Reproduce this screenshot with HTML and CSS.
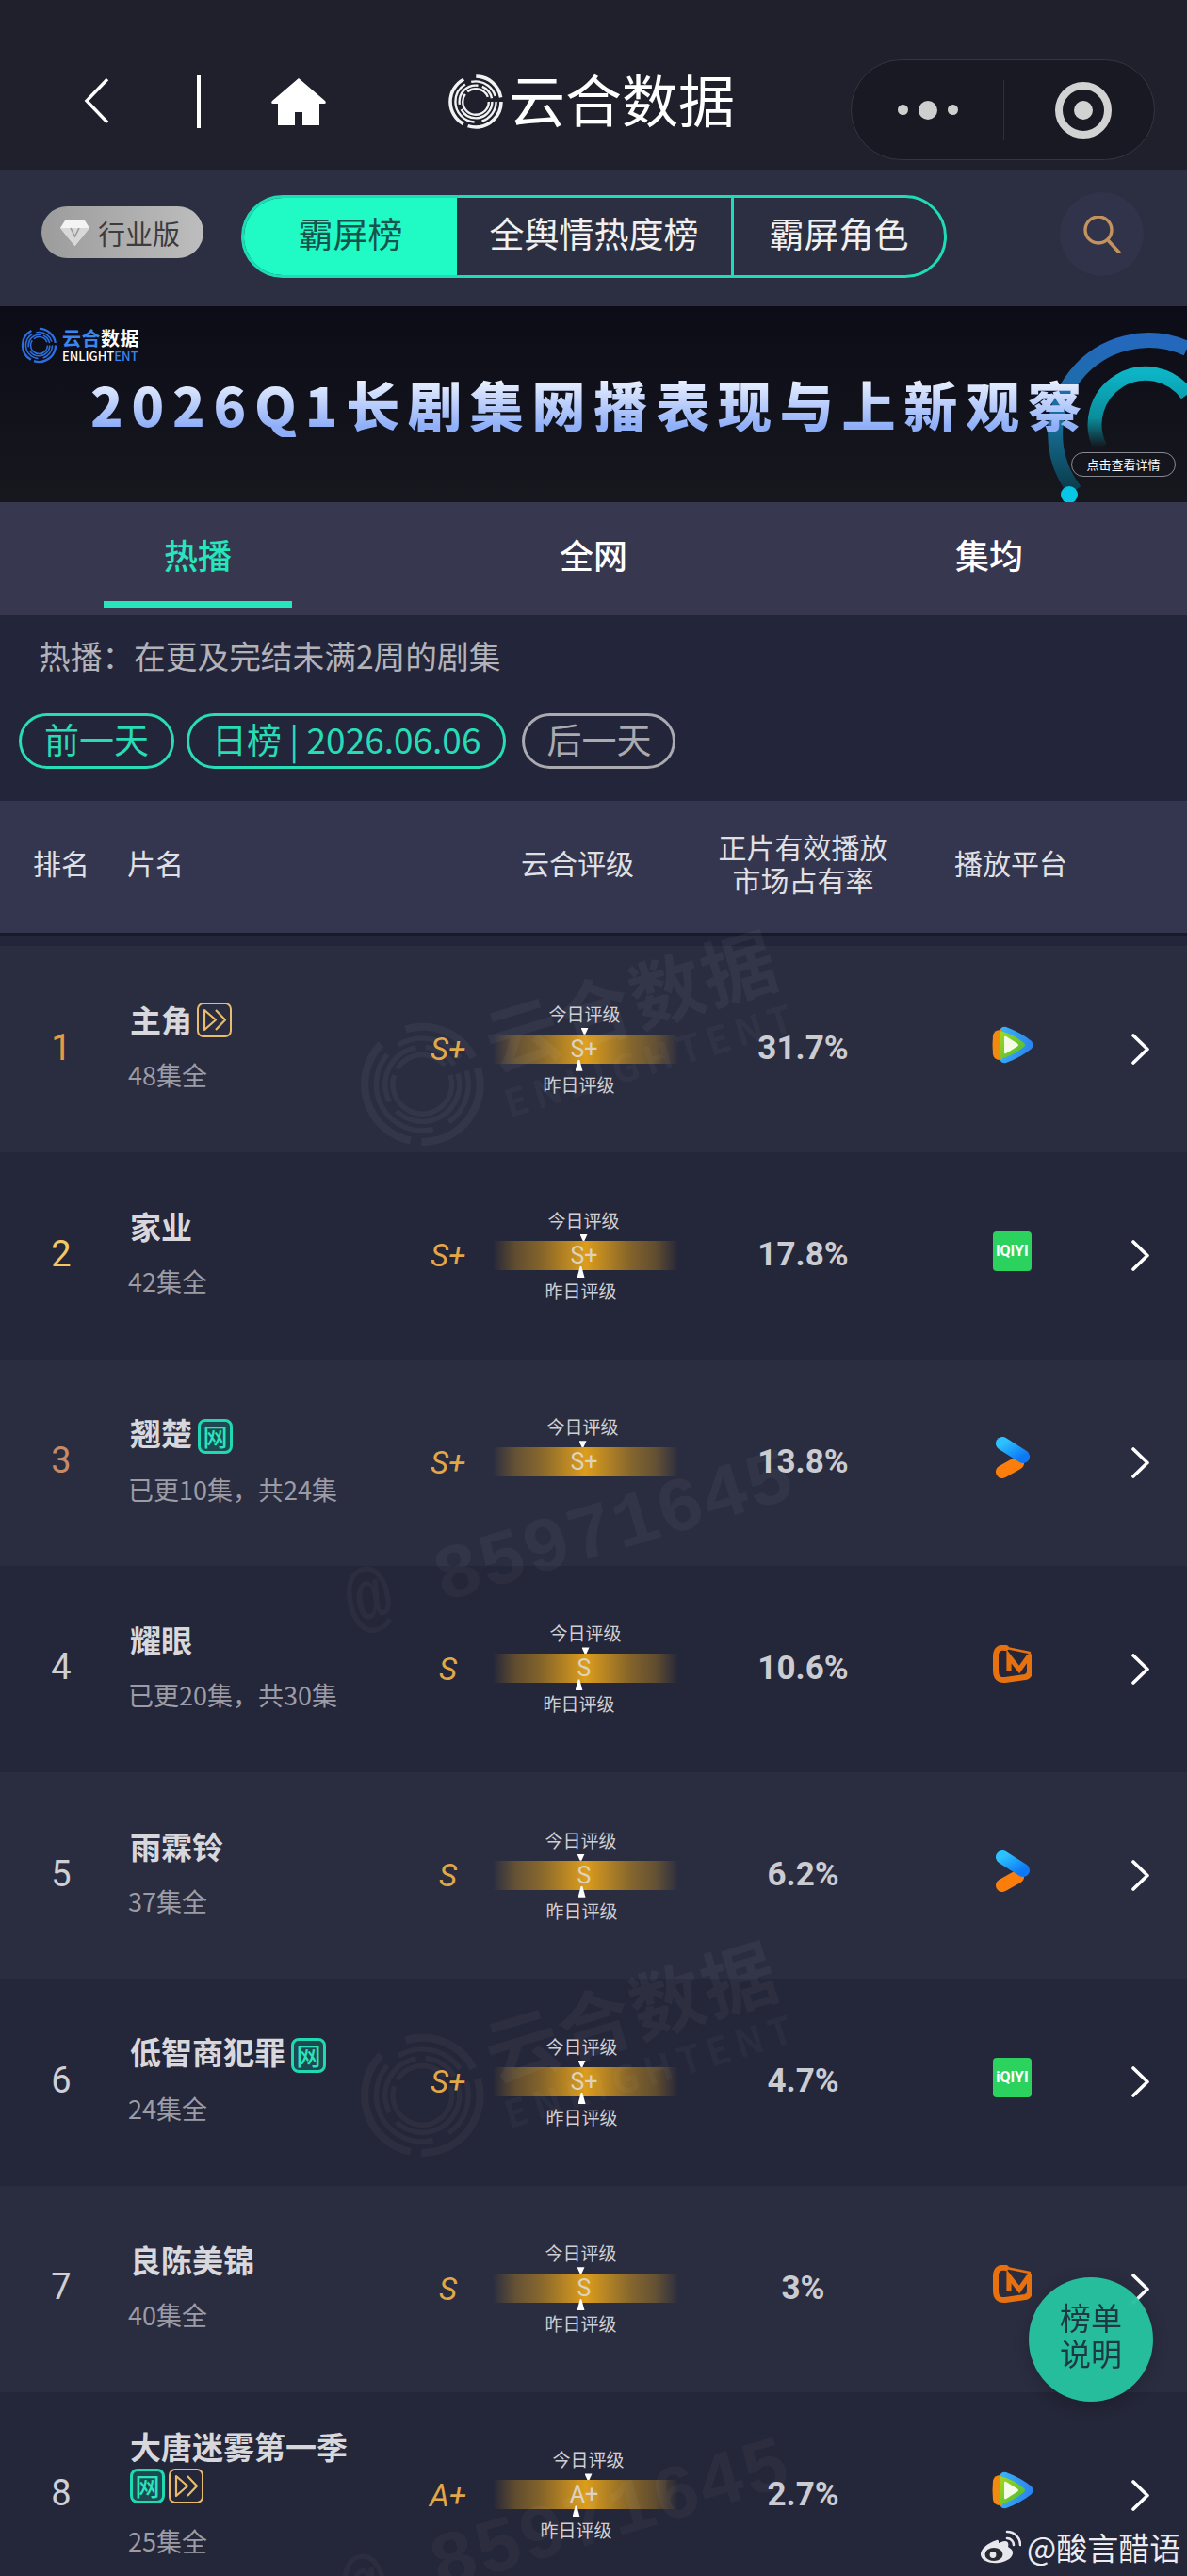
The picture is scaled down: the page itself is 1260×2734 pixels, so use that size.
FILE: index.html
```html
<!DOCTYPE html>
<html lang="zh-CN">
<head>
  <meta charset="UTF-8" />
  <title>云合数据</title>
  <link rel="stylesheet" href="styles.css">
</head>
<body>
  <svg class="defs" width="0" height="0">
    <defs>
      <symbol id="rings" viewBox="0 0 100 100">
        <g fill="none" stroke="currentColor">
          <circle cx="50" cy="50" r="45" stroke-width="6" pathLength="100" stroke-dasharray="30 3 34 8 22 3" />
          <circle cx="50" cy="50" r="36" stroke-width="4" pathLength="100" stroke-dasharray="20 6 40 5 24 5" />
          <circle cx="50" cy="50" r="29" stroke-width="4" pathLength="100" stroke-dasharray="42 5 30 4 15 4" />
          <circle cx="50" cy="50" r="23" stroke-width="4" pathLength="100" stroke-dasharray="60 4 30 6" />
        </g>
      </symbol>
      <symbol id="chevron" viewBox="0 0 19 33">
        <path d="M2 2 L17 16.5 L2 31" fill="none" stroke="#fff" stroke-width="3.6" stroke-linecap="round" stroke-linejoin="round" />
      </symbol>
      <symbol id="play-badge" viewBox="0 0 37 37">
        <rect x="1" y="1" width="35" height="35" rx="6" fill="none" stroke="#e9bb6c" stroke-width="2" />
        <path d="M8 8 L20 18.5 L8 29 Z M20 8 L30 18.5 L20 29" fill="none" stroke="#e9bb6c" stroke-width="2.2" stroke-linejoin="round" />
      </symbol>
      <linearGradient id="tx-blue" x1="0" y1="0" x2="1" y2="0.3">
        <stop offset="0" stop-color="#3db4f5" />
        <stop offset="1" stop-color="#2a86ee" />
      </linearGradient>
      <linearGradient id="tx-green" x1="0" y1="0" x2="1" y2="1">
        <stop offset="0" stop-color="#a6d81f" />
        <stop offset="1" stop-color="#45b83a" />
      </linearGradient>
      <linearGradient id="yk-blue" x1="0" y1="0" x2="1" y2="1">
        <stop offset="0" stop-color="#2cc1ff" />
        <stop offset="1" stop-color="#0c78f5" />
      </linearGradient>
      <symbol id="tencent" viewBox="0 0 44 40">
        <path d="M9 3 Q11 0 15 1 Q31 7 42 16 Q45 20 42 24 Q31 33 15 39 Q11 40 9 37 Z" fill="url(#tx-blue)" />
        <path d="M9 4 Q2 4 1 10 Q0 20 1 30 Q2 36 9 36 L11 36 L11 4 Z" fill="#f28a0f" />
        <path d="M8 5 Q22 8 34 18 Q36 20 34 22 Q22 32 8 35 Z" fill="url(#tx-green)" />
        <path d="M13 12 Q13 10 15 11 L27 18.5 Q29 20 27 21.5 L15 29 Q13 30 13 28 Z" fill="#f4fbe6" />
      </symbol>
      <symbol id="youku" viewBox="0 0 36 44">
        <path d="M7 37 L23 28" fill="none" stroke="#fb7d0c" stroke-width="14" stroke-linecap="round" />
        <path d="M7 7 L29 21" fill="none" stroke="url(#yk-blue)" stroke-width="14" stroke-linecap="round" />
      </symbol>
      <symbol id="mango" viewBox="0 0 41 41">
        <path d="M12 2.5 L39 8" fill="none" stroke="#e8710f" stroke-width="2.5" stroke-linecap="round" />
        <path d="M14 3 Q3 1 3 12 V27 Q3 38 13 37 L34 34 Q39 33 39 28 V12" fill="none" stroke="#e8710f" stroke-width="6" stroke-linecap="round" />
        <path d="M17 28 L17 12 L28 26 L38 12" fill="none" stroke="#e8710f" stroke-width="5.2" stroke-linejoin="miter" />
      </symbol>
    </defs>
  </svg>

  <div class="page">
    <div class="topbar">
      <svg class="back" viewBox="0 0 27 48"><path d="M25 1 L3 24 L25 47" fill="none" stroke="#fff" stroke-width="3.4" /></svg>
      <span class="topbar-line"></span>
      <svg class="home" viewBox="0 0 58 50"><path d="M29 0 L57 24 Q59 27 56 27 H51 V50 H33 V36 H25 V50 H7 V27 H2 Q-1 27 1 24 Z" fill="#fff" /></svg>
      <svg class="brand-logo"><use href="#rings" /></svg>
      <span class="brand-name">云合数据</span>
      <div class="capsule">
        <div class="capsule-dots"><i></i><b></b><i></i></div>
        <span class="capsule-line"></span>
        <div class="capsule-target"><b></b></div>
      </div>
    </div>

    <div class="boardbar">
      <div class="edition">
        <svg class="gem" viewBox="0 0 31 28">
          <path d="M5 1 H26 L31 9 L15.5 28 L0 9 Z" fill="#f4f4f4" />
          <path d="M0 9 H31 L15.5 28 Z" fill="#d8d8d8" />
          <path d="M11 9 L15.5 18 L20 9" fill="none" stroke="#9a9a9a" stroke-width="1.6" />
        </svg>
        <span>行业版</span>
      </div>
      <div class="segments">
        <div class="seg seg-on">霸屏榜</div>
        <div class="seg seg-mid">全舆情热度榜</div>
        <div class="seg seg-last">霸屏角色</div>
      </div>
      <div class="search">
        <svg viewBox="0 0 40 40"><circle cx="16" cy="15" r="14" fill="none" stroke="#c2935f" stroke-width="3.4" /><path d="M27 27 L38 39" stroke="#c2935f" stroke-width="3.6" stroke-linecap="round" /></svg>
      </div>
    </div>

    <div class="banner">
      <div class="banner-logo">
        <svg class="banner-rings"><use href="#rings" /></svg>
        <div>
          <div class="banner-cn"><span>云合</span>数据</div>
          <div class="banner-en">ENLIGHT<span>ENT</span></div>
        </div>
      </div>
      <div class="banner-title">2026Q1长剧集网播表现与上新观察</div>
      <svg class="banner-arcs" viewBox="0 0 220 208">
        <defs>
          <linearGradient id="arc-out" x1="0" y1="0" x2="0" y2="1">
            <stop offset="0" stop-color="#2468bd" />
            <stop offset="0.55" stop-color="#17709a" />
            <stop offset="1" stop-color="#0a3b48" />
          </linearGradient>
          <linearGradient id="arc-in" x1="0" y1="0" x2="0" y2="1">
            <stop offset="0" stop-color="#0cb4c6" />
            <stop offset="0.6" stop-color="#0b8d9c" />
            <stop offset="1" stop-color="#0b8d9c" stop-opacity="0" />
          </linearGradient>
        </defs>
        <path d="M101 196 A99 99 0 0 1 220 45" fill="none" stroke="url(#arc-out)" stroke-width="16" />
        <path d="M128 150 A54 54 0 0 1 220 94" fill="none" stroke="url(#arc-in)" stroke-width="15" />
        <circle cx="95" cy="200" r="9" fill="#08c6e6" />
      </svg>
      <div class="banner-btn">点击查看详情</div>
    </div>

    <div class="tabs">
      <div class="tab tab-on">热播</div>
      <div class="tab">全网</div>
      <div class="tab">集均</div>
    </div>

    <div class="filter">
      <div class="filter-desc">热播：在更及完结未满2周的剧集</div>
      <div class="filter-pills">
        <span class="pill">前一天</span>
        <span class="pill">日榜 | 2026.06.06</span>
        <span class="pill pill-off">后一天</span>
      </div>
    </div>

    <div class="thead">
      <div class="th-rank">排名</div>
      <div class="th-name">片名</div>
      <div class="th-mid">云合评级</div>
      <div class="th-share">正片有效播放<br>市场占有率</div>
      <div class="th-mid th-plat">播放平台</div>
    </div>
    <div class="thead-gap"></div>

    <div class="list">
      <div class="row">
        <div class="rank rank-1">1</div>
        <div class="name"><div class="title">主角<svg class="badge"><use href="#play-badge" /></svg></div><div class="sub">48集全</div></div>
        <div class="grade">S+</div>
        <div class="rating">
          <div class="mark-top" style="transform: translateX(-1px)"><span>今日评级</span><i></i></div>
          <div class="bar">S+</div>
          <div class="mark-bottom" style="transform: translateX(-7px)"><i></i><span>昨日评级</span></div>
        </div>
        <div class="share">31.7%</div>
        <div class="plat"><svg class="ico-tencent"><use href="#tencent" /></svg></div>
        <div class="arrow"><svg><use href="#chevron" /></svg></div>
      </div>

      <div class="row">
        <div class="rank rank-2">2</div>
        <div class="name"><div class="title">家业</div><div class="sub">42集全</div></div>
        <div class="grade">S+</div>
        <div class="rating">
          <div class="mark-top" style="transform: translateX(-2px)"><span>今日评级</span><i></i></div>
          <div class="bar">S+</div>
          <div class="mark-bottom" style="transform: translateX(-5px)"><i></i><span>昨日评级</span></div>
        </div>
        <div class="share">17.8%</div>
        <div class="plat"><div class="iqiyi">iQIYI</div></div>
        <div class="arrow"><svg><use href="#chevron" /></svg></div>
      </div>

      <div class="row">
        <div class="rank rank-3">3</div>
        <div class="name"><div class="title">翘楚<span class="badge-net">网</span></div><div class="sub">已更10集，共24集</div></div>
        <div class="grade">S+</div>
        <div class="rating">
          <div class="mark-top" style="transform: translateX(-3px)"><span>今日评级</span><i></i></div>
          <div class="bar">S+</div>
          <div class="mark-bottom"></div>
        </div>
        <div class="share">13.8%</div>
        <div class="plat"><svg class="ico-youku"><use href="#youku" /></svg></div>
        <div class="arrow"><svg><use href="#chevron" /></svg></div>
      </div>

      <div class="row">
        <div class="rank">4</div>
        <div class="name"><div class="title">耀眼</div><div class="sub">已更20集，共30集</div></div>
        <div class="grade">S</div>
        <div class="rating">
          <div class="mark-top"><span>今日评级</span><i></i></div>
          <div class="bar">S</div>
          <div class="mark-bottom" style="transform: translateX(-7px)"><i></i><span>昨日评级</span></div>
        </div>
        <div class="share">10.6%</div>
        <div class="plat"><svg class="ico-mango"><use href="#mango" /></svg></div>
        <div class="arrow"><svg><use href="#chevron" /></svg></div>
      </div>

      <div class="row">
        <div class="rank">5</div>
        <div class="name"><div class="title">雨霖铃</div><div class="sub">37集全</div></div>
        <div class="grade">S</div>
        <div class="rating">
          <div class="mark-top" style="transform: translateX(-5px)"><span>今日评级</span><i></i></div>
          <div class="bar">S</div>
          <div class="mark-bottom" style="transform: translateX(-4px)"><i></i><span>昨日评级</span></div>
        </div>
        <div class="share">6.2%</div>
        <div class="plat"><svg class="ico-youku"><use href="#youku" /></svg></div>
        <div class="arrow"><svg><use href="#chevron" /></svg></div>
      </div>

      <div class="row">
        <div class="rank">6</div>
        <div class="name"><div class="title">低智商犯罪<span class="badge-net">网</span></div><div class="sub">24集全</div></div>
        <div class="grade">S+</div>
        <div class="rating">
          <div class="mark-top" style="transform: translateX(-4px)"><span>今日评级</span><i></i></div>
          <div class="bar">S+</div>
          <div class="mark-bottom" style="transform: translateX(-4px)"><i></i><span>昨日评级</span></div>
        </div>
        <div class="share">4.7%</div>
        <div class="plat"><div class="iqiyi">iQIYI</div></div>
        <div class="arrow"><svg><use href="#chevron" /></svg></div>
      </div>

      <div class="row">
        <div class="rank">7</div>
        <div class="name"><div class="title">良陈美锦</div><div class="sub">40集全</div></div>
        <div class="grade">S</div>
        <div class="rating">
          <div class="mark-top" style="transform: translateX(-5px)"><span>今日评级</span><i></i></div>
          <div class="bar">S</div>
          <div class="mark-bottom" style="transform: translateX(-5px)"><i></i><span>昨日评级</span></div>
        </div>
        <div class="share">3%</div>
        <div class="plat"><svg class="ico-mango"><use href="#mango" /></svg></div>
        <div class="arrow"><svg><use href="#chevron" /></svg></div>
      </div>

      <div class="row">
        <div class="rank">8</div>
        <div class="name"><div class="title">大唐迷雾第一季 <span class="badge-pair"><span class="badge-net">网</span><svg class="badge"><use href="#play-badge" /></svg></span></div><div class="sub">25集全</div></div>
        <div class="grade">A+</div>
        <div class="rating">
          <div class="mark-top" style="transform: translateX(3px)"><span>今日评级</span><i></i></div>
          <div class="bar">A+</div>
          <div class="mark-bottom" style="transform: translateX(-10px)"><i></i><span>昨日评级</span></div>
        </div>
        <div class="share">2.7%</div>
        <div class="plat"><svg class="ico-tencent"><use href="#tencent" /></svg></div>
        <div class="arrow"><svg><use href="#chevron" /></svg></div>
      </div>

      <!-- watermarks sit on top of the list -->
      <div class="wm wm-a">
        <svg class="wm-rings"><use href="#rings" /></svg>
        <div class="wm-words"><div class="wm-cn">云合数据</div><div class="wm-en">ENLIGHTENT</div></div>
      </div>
      <div class="wm wm-b">
        <svg class="wm-rings"><use href="#rings" /></svg>
        <div class="wm-words"><div class="wm-cn">云合数据</div><div class="wm-en">ENLIGHTENT</div></div>
      </div>
      <div class="wm-num wm-num-a">@ 85971645</div>
      <div class="wm-num wm-num-b">@ 85971645</div>
    </div>

    <div class="help">榜单<br>说明</div>
    <div class="weibo">
      <svg viewBox="0 0 44 36">
        <path d="M18 11 C8 14 0 21 1 27 C2 33 11 36 20 35 C29 34 36 29 35 23 C34 20 31 19 30 18 C31 15 30 12 27 12 C24 12 21 14 20 14 C20 12 20 10 18 11 Z" fill="#e8e8ec" />
        <ellipse cx="15" cy="26" rx="9.5" ry="7" fill="#2a2a33" />
        <circle cx="14" cy="26.5" r="3.4" fill="#e8e8ec" />
        <path d="M29 9 A7 7 0 0 1 36 16" fill="none" stroke="#e8e8ec" stroke-width="2.6" stroke-linecap="round" />
        <path d="M29 2 A14 14 0 0 1 43 16" fill="none" stroke="#e8e8ec" stroke-width="2.6" stroke-linecap="round" />
      </svg>
      <span>@酸言醋语</span>
    </div>
  </div>
</body>
</html>
```

FILE: styles.css
```css
* {
  box-sizing: border-box;
}
body {
  margin: 0;
  background: #23253a;
  font-family: "Noto Sans CJK SC", "Noto Sans", sans-serif;
  color: #fff;
}
.defs {
  position: absolute;
}
.page {
  position: relative;
  width: 1260px;
  height: 2734px;
  overflow: hidden;
}

/* top bar */
.topbar {
  height: 180px;
  background: #1f202b;
  display: flex;
  align-items: center;
  padding: 36px 34px 0 89px;
}
.back {
  width: 27px;
  height: 48px;
  margin-top: -2px;
}
.topbar-line {
  width: 4px;
  height: 56px;
  background: #fff;
  margin-left: 93px;
}
.home {
  width: 58px;
  height: 50px;
  margin-left: 75px;
}
.brand-logo {
  width: 60px;
  height: 62px;
  margin-left: 129px;
  color: #f2f2f2;
}
.brand-name {
  font-size: 60px;
  line-height: 70px;
  margin-left: 5px;
  margin-top: -8px;
}
.capsule {
  width: 323px;
  height: 107px;
  margin-left: auto;
  margin-top: 17px;
  background: #181922;
  border: 1px solid #34353f;
  border-radius: 54px;
  display: flex;
  align-items: center;
}
.capsule-dots {
  width: 161px;
  display: flex;
  align-items: center;
  justify-content: center;
  gap: 11px;
}
.capsule-dots i {
  width: 11px;
  height: 11px;
  border-radius: 50%;
  background: #cfcfcf;
}
.capsule-dots b {
  width: 20px;
  height: 20px;
  border-radius: 50%;
  background: #cfcfcf;
}
.capsule-line {
  width: 1px;
  height: 64px;
  background: #2e2f39;
}
.capsule-target {
  width: 60px;
  height: 60px;
  margin-left: 54px;
  border: 8px solid #d2d2d2;
  border-radius: 50%;
  display: flex;
  align-items: center;
  justify-content: center;
}
.capsule-target b {
  width: 20px;
  height: 20px;
  border-radius: 50%;
  background: #d2d2d2;
}

/* board switch */
.boardbar {
  height: 145px;
  background: #2b2f41;
  display: flex;
  align-items: flex-start;
  padding-left: 44px;
}
.edition {
  width: 172px;
  height: 55px;
  margin-top: 39px;
  border-radius: 28px;
  background: linear-gradient(90deg, #9c9c9c, #bdbdbd);
  color: #3c3c3e;
  font-size: 29px;
  display: flex;
  align-items: center;
  padding-left: 20px;
  gap: 9px;
}
.gem {
  width: 31px;
  height: 28px;
}
.segments {
  width: 749px;
  height: 88px;
  margin-top: 27px;
  margin-left: 40px;
  border: 3px solid #1fdcb8;
  border-radius: 44px;
  display: flex;
  overflow: hidden;
}
.seg {
  font-size: 37px;
  display: flex;
  align-items: center;
  justify-content: center;
  padding-bottom: 8px;
  color: #f0f0f0;
}
.seg-on {
  width: 226px;
  background: #20fbc5;
  color: #17544e;
}
.seg-mid {
  width: 294px;
  border-right: 3px solid #1fdcb8;
}
.seg-last {
  flex: 1;
}
.search {
  width: 89px;
  height: 89px;
  margin-top: 24px;
  margin-left: auto;
  margin-right: 46px;
  border-radius: 50%;
  background: #31334a;
  display: flex;
  align-items: center;
  justify-content: center;
}
.search svg {
  width: 40px;
  height: 40px;
}

/* banner */
.banner {
  position: relative;
  height: 208px;
  background: linear-gradient(180deg, #0b0c17, #17171e);
  padding: 22px 0 0 22px;
  overflow: hidden;
}
.banner-logo {
  display: flex;
  gap: 5px;
}
.banner-rings {
  width: 39px;
  height: 39px;
  color: #2b6fe0;
}
.banner-cn {
  font-size: 20px;
  line-height: 24px;
  font-weight: 700;
  letter-spacing: 0.5px;
}
.banner-cn span {
  color: #3a86ee;
}
.banner-en {
  font-size: 13px;
  line-height: 14px;
  font-weight: 500;
}
.banner-en span {
  color: #3a86ee;
}
.banner-title {
  position: relative;
  z-index: 1;
  margin: 6px 0 0 74px;
  font-size: 57px;
  line-height: 72px;
  font-weight: 900;
  letter-spacing: 8.8px;
  white-space: nowrap;
  background: linear-gradient(180deg, #f2f6ff 10%, #8eaef8 85%);
  -webkit-background-clip: text;
  background-clip: text;
  color: transparent;
}
.banner-arcs {
  position: absolute;
  right: 0;
  top: 0;
  width: 220px;
  height: 208px;
}
.banner-btn {
  position: absolute;
  left: 1137px;
  top: 155px;
  width: 111px;
  height: 26px;
  border: 1px solid #8a8a92;
  border-radius: 13px;
  font-size: 13px;
  line-height: 24px;
  text-align: center;
}

/* sub tabs */
.tabs {
  height: 120px;
  background: #373850;
  display: grid;
  grid-template-columns: repeat(3, 1fr);
}
.tab {
  position: relative;
  font-size: 36px;
  font-weight: 500;
  display: flex;
  align-items: center;
  justify-content: center;
  padding-bottom: 10px;
}
.tab-on {
  color: #27e6bd;
}
.tab-on::after {
  content: "";
  position: absolute;
  left: 110px;
  bottom: 8px;
  width: 200px;
  height: 7px;
  background: #27e6bd;
}

/* filter */
.filter {
  height: 197px;
  padding: 21px 20px 0;
  background: #23253a;
}
.filter-desc {
  font-size: 33.7px;
  line-height: 44px;
  padding-left: 21px;
  color: #b2b2b8;
}
.filter-pills {
  display: flex;
  gap: 13px;
  margin-top: 39px;
}
.pill {
  height: 59px;
  padding: 0 24px;
  border: 3px solid #27dcb6;
  border-radius: 30px;
  color: #27dcb6;
  font-size: 37px;
  line-height: 48px;
}
.pill-off {
  margin-left: 4px;
  padding: 0 23px;
  border-color: #aaaab0;
  color: #aaaab0;
}

/* table head */
.thead {
  height: 140px;
  background: #33364e;
  display: grid;
  grid-template-columns: 130px 393px 180px 299px 142px;
  align-items: center;
  padding-bottom: 9px;
  font-size: 30px;
  line-height: 35px;
  color: #e0e0e4;
}
.th-rank,
.th-mid,
.th-share {
  text-align: center;
}
.th-name {
  padding-left: 5px;
}
.thead-gap {
  height: 14px;
  border-top: 3px solid #191a27;
  background: #23253a;
}

/* rows */
.list {
  position: relative;
}
.row {
  height: 219.25px;
  display: grid;
  grid-template-columns: 130px 310px 83px 197px 265px 176px 99px;
  align-items: center;
  background: #2a2d40;
}
.row:nth-child(even) {
  background: #242639;
}
.rank {
  text-align: center;
  padding-bottom: 4px;
  font-family: Roboto, sans-serif;
  font-size: 38px;
  color: #cfcfd4;
}
.rank-1 {
  color: #ea9a44;
}
.rank-2 {
  color: #f2c864;
}
.rank-3 {
  color: #c58a68;
}
.name {
  padding: 0 0 8px 8px;
}
.title {
  font-size: 33px;
  line-height: 42px;
  font-weight: 700;
  color: #d8d8dc;
}
.badge {
  width: 37px;
  height: 37px;
  margin-left: 5px;
  vertical-align: -5px;
}
.badge-net {
  display: inline-block;
  width: 37px;
  height: 37px;
  margin-left: 6px;
  border: 3px solid #20d9b3;
  border-radius: 8px;
  background: #1c4a50;
  color: #2be3bd;
  font-size: 26px;
  line-height: 29px;
  font-weight: 500;
  text-align: center;
  vertical-align: -1px;
}
.badge-pair {
  display: inline-flex;
  vertical-align: top;
  margin-top: 3px;
}
.badge-pair .badge {
  margin-left: 4px;
}
.badge-pair .badge-net {
  margin-left: 0;
}
.sub {
  margin-top: 20px;
  margin-left: -2px;
  font-size: 27px;
  line-height: 35px;
  color: #9c9ca6;
}
.grade {
  text-align: center;
  padding-right: 12px;
  font-family: Roboto, sans-serif;
  font-size: 33px;
  font-style: italic;
  color: #e2a746;
}
.rating {
  display: flex;
  flex-direction: column;
  align-items: center;
}
.mark-top {
  position: relative;
  z-index: 1;
  height: 36px;
  display: flex;
  flex-direction: column;
  align-items: center;
}
.mark-top i {
  width: 8px;
  height: 12px;
  margin-top: 1px;
  background: #fff;
  clip-path: polygon(0 0, 100% 0, 60% 100%, 40% 100%);
}
.mark-bottom {
  position: relative;
  z-index: 1;
  height: 41px;
  margin-top: -4px;
  display: flex;
  flex-direction: column;
  align-items: center;
}
.mark-bottom i {
  width: 8px;
  height: 12px;
  background: #fff;
  clip-path: polygon(40% 0, 60% 0, 100% 100%, 0 100%);
}
.mark-top span,
.mark-bottom span {
  width: 90px;
  height: 28px;
  font-size: 19px;
  line-height: 28px;
  text-align: center;
  color: #cfcfd4;
}
.bar {
  width: 197px;
  height: 31px;
  background: linear-gradient(90deg, rgba(221, 157, 28, 0) 0%, rgba(221, 157, 28, 0.32) 12%, rgba(221, 157, 28, 0.5) 25%, #dd9d1c 50%, rgba(221, 157, 28, 0.5) 75%, rgba(221, 157, 28, 0.32) 88%, rgba(221, 157, 28, 0) 100%);
  font-family: Roboto, sans-serif;
  font-size: 25px;
  line-height: 31px;
  text-align: center;
  color: #dcd2be;
  padding-right: 3px;
}
.share {
  text-align: center;
  padding-bottom: 2px;
  font-family: Roboto, sans-serif;
  font-size: 35px;
  font-weight: 700;
  color: #cbccd2;
}
.plat {
  display: flex;
  justify-content: center;
  padding: 0 0 10px 3px;
}
.ico-tencent {
  width: 44px;
  height: 40px;
}
.ico-youku {
  width: 36px;
  height: 44px;
}
.ico-mango {
  width: 41px;
  height: 41px;
}
.iqiyi {
  width: 41px;
  height: 42px;
  border-radius: 4px;
  background: #2bd35e;
  font-family: Roboto, sans-serif;
  font-size: 16px;
  font-weight: 700;
  line-height: 42px;
  text-align: center;
}
.arrow {
  display: flex;
  justify-content: center;
}
.arrow svg {
  width: 19px;
  height: 33px;
}

/* watermarks */
.wm {
  position: absolute;
  display: flex;
  align-items: center;
  gap: 10px;
  color: rgba(255, 255, 255, 0.045);
  transform: rotate(-17deg);
  pointer-events: none;
}
.wm-a {
  left: 373px;
  top: 30px;
}
.wm-b {
  left: 373px;
  top: 1103px;
}
.wm-rings {
  width: 136px;
  height: 136px;
}
.wm-cn {
  font-size: 78px;
  line-height: 88px;
  font-weight: 700;
  letter-spacing: 2px;
}
.wm-en {
  font-size: 40px;
  line-height: 48px;
  font-weight: 700;
  letter-spacing: 7px;
}
.wm-num {
  position: absolute;
  font-family: "Liberation Mono", monospace;
  font-size: 82px;
  line-height: 90px;
  font-weight: 700;
  white-space: nowrap;
  color: rgba(255, 255, 255, 0.04);
  transform: rotate(-16.5deg);
  pointer-events: none;
}
.wm-num-a {
  left: 359px;
  top: 589px;
}
.wm-num-b {
  left: 355px;
  top: 1637px;
}

/* floating things */
.help {
  position: absolute;
  left: 1092px;
  top: 2417px;
  width: 132px;
  height: 132px;
  border-radius: 50%;
  background: #26c29f;
  opacity: 0.97;
  box-shadow: 0 4px 20px rgba(0, 0, 0, 0.2);
  color: #1f3a44;
  font-size: 33px;
  line-height: 38px;
  text-align: center;
  padding-top: 23px;
}
.weibo {
  position: absolute;
  left: 1040px;
  top: 2680px;
  display: flex;
  align-items: center;
  gap: 6px;
  color: #ececf0;
  font-size: 33px;
  line-height: 46px;
  white-space: nowrap;
}
.weibo svg {
  width: 44px;
  height: 36px;
}
```
